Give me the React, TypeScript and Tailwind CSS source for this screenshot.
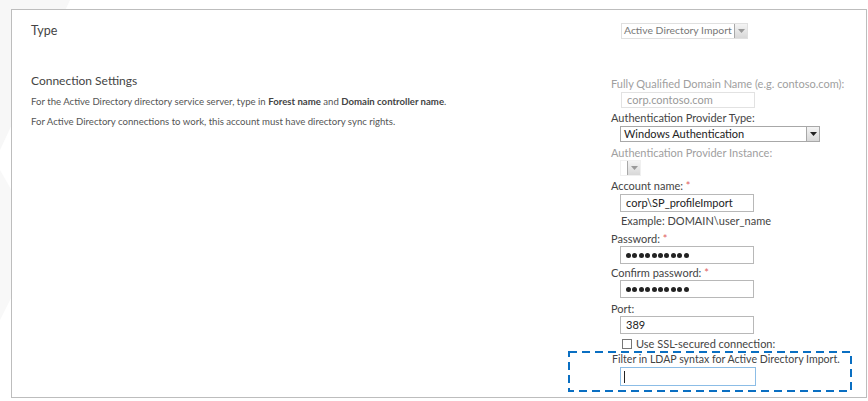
import React from "react"

const font = { fontFamily: 'Lato, "Open Sans", sans-serif' }

function Arrow({ disabled }: { disabled?: boolean }) {
  return (
    <div className="flex h-full w-[13px] shrink-0 items-center justify-center border-l border-[#a8a8a8] bg-gradient-to-b from-[#f4f4f4] to-[#d8d8d8]">
      <svg width="7" height="4" viewBox="0 0 7 4">
        <path d="M0 0h7L3.5 4z" fill={disabled ? "#999" : "#222"} />
      </svg>
    </div>
  )
}

function Label({ text, req, disabled }: { text: string; req?: boolean; disabled?: boolean }) {
  return (
    <div className={`h-[15px] whitespace-nowrap leading-[15px] ${disabled ? "text-[#a0a0a0]" : "text-[#444]"}`}>
      {text}
      {req && <span className="text-[#e06060]"> *</span>}
    </div>
  )
}

function TextBox({ value, dots }: { value: string; dots?: boolean }) {
  return (
    <div className="ml-[9px] flex h-[18px] w-[134px] items-center border border-[#b8b8b8] bg-white px-[5px] text-[#222]">
      {dots ? (
        <div className="flex gap-[1.4px]">
          {[0, 1, 2, 3, 4, 5, 6, 7, 8, 9].map((i) => (
            <div key={i} className="h-[5px] w-[5px] rounded-full bg-[#222]" />
          ))}
        </div>
      ) : (
        value
      )}
    </div>
  )
}

export default function App() {
  return (
    <div className="relative h-[401px] w-[868px] overflow-hidden bg-white pl-[11px] pt-[9px] text-[11px]" style={font}>
      <svg className="absolute left-0 top-0" width="120" height="401" viewBox="0 0 120 401">
        <path d="M0 0h70L0 150z" fill="#f7f7f7" />
        <path d="M0 170l40 70L0 320z" fill="#f8f8f8" />
      </svg>
      <div className="relative flex h-[389px] w-[856px] border border-[#bdbdbd] bg-white">
        {/* left column */}
        <div className="w-[599px] pl-[19px] pt-[12px]">
          <div className="text-[12.5px] leading-[18px] text-[#444]">Type</div>
          <div className="mt-[32px] text-[12px] leading-[18px] text-[#444]">Connection Settings</div>
          <div className="mt-[2px] text-[9.6px] leading-[20px] text-[#555]">
            <div>
              For the Active Directory directory service server, type in <b className="text-[#444]">Forest name</b> and{" "}
              <b className="text-[#444]">Domain controller name</b>.
            </div>
            <div>For Active Directory connections to work, this account must have directory sync rights.</div>
          </div>
        </div>

        {/* right column */}
        <div className="flex flex-col pt-[13px]">
          <div className="ml-[10px] flex h-[16px] w-[127px] items-center overflow-hidden border border-[#e0e0e0] bg-white">
            <div className="flex-1 whitespace-nowrap pl-[2px] text-[10.4px] text-[#777]">Active Directory Import</div>
            <Arrow disabled />
          </div>

          <div className="mt-[37px]">
            <Label text="Fully Qualified Domain Name (e.g. contoso.com):" disabled />
          </div>
          <div className="ml-[10px] mt-[1px] flex h-[16px] w-[134px] items-center border border-[#e2e2e2] px-[5px] text-[#999]">
            corp.contoso.com
          </div>

          <div className="mt-[2px]">
            <Label text="Authentication Provider Type:" />
          </div>
          <div className="ml-[9px] mt-[1px] flex h-[16px] w-[200px] items-center border border-[#a8a8a8] bg-white">
            <div className="flex-1 pl-[3px] text-[#222]">Windows Authentication</div>
            <Arrow />
          </div>

          <div className="mt-[3px]">
            <Label text="Authentication Provider Instance:" disabled />
          </div>
          <div className="ml-[9px] flex h-[16px] w-[21px] items-center border border-[#f0f0f0] bg-white">
            <div className="flex-1" />
            <Arrow disabled />
          </div>

          <div className="mt-[2px]">
            <Label text="Account name:" req />
          </div>
          <div className="mt-[1px]">
            <TextBox value="corp\SP_profileImport" />
          </div>
          <div className="ml-[10px] h-[17px] whitespace-nowrap leading-[18px] text-[#444]">Example: DOMAIN\user_name</div>

          <div className="mt-[2px]">
            <Label text="Password:" req />
          </div>
          <TextBox value="" dots />

          <div className="mt-[1px]">
            <Label text="Confirm password:" req />
          </div>
          <TextBox value="" dots />

          <div className="mt-[3px]">
            <Label text="Port:" />
          </div>
          <TextBox value="389" />

          <div className="ml-[11px] mt-[2px] flex h-[16px] items-center gap-[4px] whitespace-nowrap text-[#444]">
            <div className="h-[10px] w-[10px] border border-[#777] bg-white" />
            <span>Use SSL-secured connection:</span>
          </div>

          <div className="relative ml-[-43px] mt-[-1px] h-[41px] w-[284px] pl-[44px] pt-[1px]">
            <svg className="absolute left-0 top-0" width="284" height="41">
              <rect x="1" y="1" width="282" height="39" fill="none" stroke="#0a6fc2" strokeWidth="2" strokeDasharray="8 5" />
            </svg>
            <div className="text-[10.6px]">
              <Label text="Filter in LDAP syntax for Active Directory Import." />
            </div>
            <div className="ml-[8px] flex h-[19px] w-[136px] items-center border border-[#8cbde6] bg-white pl-[3px]">
              <div className="h-[12px] w-[1px] bg-[#222]" />
            </div>
          </div>
        </div>
      </div>
    </div>
  )
}
